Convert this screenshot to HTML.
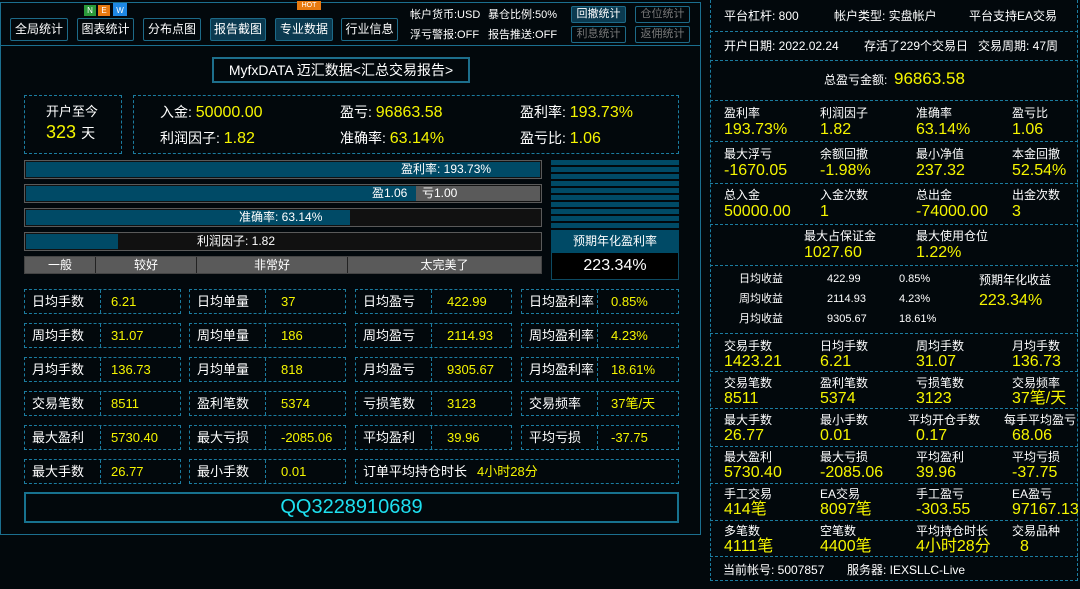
<!DOCTYPE html>
<html><head><meta charset="utf-8"><style>
*{margin:0;padding:0;box-sizing:border-box}
body{width:1080px;height:589px;background:#02080c;color:#fff;font-family:"Liberation Sans","Noto Sans CJK SC",sans-serif;font-size:12px;position:relative;overflow:hidden}
.a{position:absolute;white-space:nowrap}
.y{color:#f5f500}
.btn{position:absolute;top:18px;height:23px;border:1px solid #1d6a88;border-radius:2px;font-size:12px;line-height:21px;text-align:center;color:#fff}
.sb{position:absolute;height:17px;width:55px;border:1px solid #1d6a88;border-radius:2px;font-size:11px;line-height:15px;text-align:center;color:#777}
.d{position:absolute;border:1px dashed #1b7ca0}
.bar{position:absolute;left:24px;width:518px;border:1px solid #5a5a5a;background:#111}
.fill{position:absolute;left:1px;top:1px;bottom:1px;background:#004a66}
.bt{position:absolute;top:0;line-height:17px;font-size:12px}
.cell{position:absolute;height:25px;border:1px dashed #1b7ca0;font-size:13px;line-height:23px}
.cell .l{position:absolute;left:7px}
.cell .v{position:absolute;color:#f5f500;font-size:13px}
.cell .sp{position:absolute;left:75px;top:0;bottom:0;border-left:1px dashed #1b7ca0}
.rl{position:absolute;font-size:12px;line-height:14px;white-space:nowrap}
.rv{position:absolute;font-size:16px;line-height:18px;color:#f5f500;white-space:nowrap}
.tx{position:absolute;font-size:11px;line-height:14px;white-space:nowrap}
</style></head><body>
<div class="a" style="left:0;top:2px;width:701px;height:533px;border:1px solid #1b6f8f"></div>
<div class="a" style="left:0;top:45px;width:701px;border-top:1px solid #1b6f8f"></div>

<div class="btn" style="left:10px;width:58px">全局统计</div>
<div class="btn" style="left:77px;width:57px">图表统计</div>
<div class="btn" style="left:143px;width:58px">分布点图</div>
<div class="btn" style="left:210px;width:56px;background:#0b3a50">报告截图</div>
<div class="btn" style="left:275px;width:58px;background:#0b3a50">专业数据</div>
<div class="btn" style="left:341px;width:57px">行业信息</div>
<div class="a" style="left:84px;top:5px;width:12px;height:11px;background:#2a9a3a;font-size:8px;line-height:11px;text-align:center">N</div>
<div class="a" style="left:98px;top:5px;width:12px;height:11px;background:#e87a10;font-size:8px;line-height:11px;text-align:center">E</div>
<div class="a" style="left:113px;top:3px;width:14px;height:13px;background:#1e88e5;font-size:8px;line-height:15px;text-align:center">W</div>
<div class="a" style="left:297px;top:1px;width:24px;height:9px;background:#e87a10;font-size:7px;line-height:9px;text-align:center">HOT</div>
<div class="tx" style="left:410px;top:8px">帐户货币:USD</div>
<div class="tx" style="left:488px;top:8px">暴仓比例:50%</div>
<div class="tx" style="left:410px;top:28px">浮亏警报:OFF</div>
<div class="tx" style="left:488px;top:28px">报告推送:OFF</div>
<div class="sb" style="left:571px;top:6px;color:#fff;background:#0b3a50">回撤统计</div>
<div class="sb" style="left:635px;top:6px">仓位统计</div>
<div class="sb" style="left:571px;top:26px">利息统计</div>
<div class="sb" style="left:635px;top:26px">返佣统计</div>

<div class="a" style="left:212px;top:57px;width:258px;height:26px;border:2px solid #1d6f8c;font-size:14px;line-height:22px;text-align:center">MyfxDATA 迈汇数据&lt;汇总交易报告&gt;</div>

<div class="d" style="left:24px;top:95px;width:98px;height:59px"></div>
<div class="a" style="left:46px;top:101px;font-size:13px">开户至今</div>
<div class="a" style="left:46px;top:122px;font-size:18px"><span class="y">323</span> <span style="font-size:14px">天</span></div>
<div class="d" style="left:133px;top:95px;width:546px;height:59px"></div>
<div class="a" style="left:160px;top:102px;font-size:14px">入金: <span class="y" style="font-size:16px">50000.00</span></div>
<div class="a" style="left:340px;top:102px;font-size:14px">盈亏: <span class="y" style="font-size:16px">96863.58</span></div>
<div class="a" style="left:520px;top:102px;font-size:14px">盈利率: <span class="y" style="font-size:16px">193.73%</span></div>
<div class="a" style="left:160px;top:128px;font-size:14px">利润因子: <span class="y" style="font-size:16px">1.82</span></div>
<div class="a" style="left:340px;top:128px;font-size:14px">准确率: <span class="y" style="font-size:16px">63.14%</span></div>
<div class="a" style="left:520px;top:128px;font-size:14px">盈亏比: <span class="y" style="font-size:16px">1.06</span></div>

<div class="bar" style="top:160px;height:19px"><div class="fill" style="right:1px"></div><div class="bt" style="left:376px">盈利率: 193.73%</div></div>
<div class="bar" style="top:184px;height:19px"><div class="fill" style="width:390px"></div><div class="fill" style="left:391px;right:1px;background:#5a5a5a"></div><div class="bt" style="left:347px">盈1.06</div><div class="bt" style="left:397px">亏1.00</div></div>
<div class="bar" style="top:208px;height:19px"><div class="fill" style="width:324px"></div><div class="bt" style="left:214px">准确率: 63.14%</div></div>
<div class="bar" style="top:232px;height:19px"><div class="fill" style="width:92px"></div><div class="bt" style="left:172px">利润因子: 1.82</div></div>
<div class="bar" style="top:256px;height:18px;background:#5a5a5a;border-color:#444">
<div class="bt" style="left:0;width:71px;text-align:center;line-height:16px;border-right:1px solid #222">一般</div>
<div class="bt" style="left:71px;width:101px;text-align:center;line-height:16px;border-right:1px solid #222">较好</div>
<div class="bt" style="left:172px;width:151px;text-align:center;line-height:16px;border-right:1px solid #222">非常好</div>
<div class="bt" style="left:323px;width:193px;text-align:center;line-height:16px">太完美了</div></div>

<div class="a" style="left:551px;top:160px;width:128px;height:70px;background:repeating-linear-gradient(#004a66 0 5px,#02080c 5px 7px)"></div>
<div class="a" style="left:551px;top:230px;width:128px;height:50px;border:1px solid #0d4a62;background:#000"></div>
<div class="a" style="left:551px;top:230px;width:128px;height:23px;background:#004a66;text-align:center;line-height:23px;font-size:12px">预期年化盈利率</div>
<div class="a" style="left:551px;top:254px;width:128px;text-align:center;font-size:16px;line-height:24px">223.34%</div>

<div class="cell" style="left:24px;top:289px;width:157px"><span class="l">日均手数</span><span class="sp"></span><span class="v" style="left:86px">6.21</span></div>
<div class="cell" style="left:189px;top:289px;width:157px"><span class="l">日均单量</span><span class="sp"></span><span class="v" style="left:91px">37</span></div>
<div class="cell" style="left:355px;top:289px;width:157px"><span class="l">日均盈亏</span><span class="sp"></span><span class="v" style="left:91px">422.99</span></div>
<div class="cell" style="left:521px;top:289px;width:158px"><span class="l">日均盈利率</span><span class="sp"></span><span class="v" style="left:89px">0.85%</span></div>
<div class="cell" style="left:24px;top:323px;width:157px"><span class="l">周均手数</span><span class="sp"></span><span class="v" style="left:86px">31.07</span></div>
<div class="cell" style="left:189px;top:323px;width:157px"><span class="l">周均单量</span><span class="sp"></span><span class="v" style="left:91px">186</span></div>
<div class="cell" style="left:355px;top:323px;width:157px"><span class="l">周均盈亏</span><span class="sp"></span><span class="v" style="left:91px">2114.93</span></div>
<div class="cell" style="left:521px;top:323px;width:158px"><span class="l">周均盈利率</span><span class="sp"></span><span class="v" style="left:89px">4.23%</span></div>
<div class="cell" style="left:24px;top:357px;width:157px"><span class="l">月均手数</span><span class="sp"></span><span class="v" style="left:86px">136.73</span></div>
<div class="cell" style="left:189px;top:357px;width:157px"><span class="l">月均单量</span><span class="sp"></span><span class="v" style="left:91px">818</span></div>
<div class="cell" style="left:355px;top:357px;width:157px"><span class="l">月均盈亏</span><span class="sp"></span><span class="v" style="left:91px">9305.67</span></div>
<div class="cell" style="left:521px;top:357px;width:158px"><span class="l">月均盈利率</span><span class="sp"></span><span class="v" style="left:89px">18.61%</span></div>
<div class="cell" style="left:24px;top:391px;width:157px"><span class="l">交易笔数</span><span class="sp"></span><span class="v" style="left:86px">8511</span></div>
<div class="cell" style="left:189px;top:391px;width:157px"><span class="l">盈利笔数</span><span class="sp"></span><span class="v" style="left:91px">5374</span></div>
<div class="cell" style="left:355px;top:391px;width:157px"><span class="l">亏损笔数</span><span class="sp"></span><span class="v" style="left:91px">3123</span></div>
<div class="cell" style="left:521px;top:391px;width:158px"><span class="l">交易频率</span><span class="sp"></span><span class="v" style="left:89px">37笔/天</span></div>
<div class="cell" style="left:24px;top:425px;width:157px"><span class="l">最大盈利</span><span class="sp"></span><span class="v" style="left:86px">5730.40</span></div>
<div class="cell" style="left:189px;top:425px;width:157px"><span class="l">最大亏损</span><span class="sp"></span><span class="v" style="left:91px">-2085.06</span></div>
<div class="cell" style="left:355px;top:425px;width:157px"><span class="l">平均盈利</span><span class="sp"></span><span class="v" style="left:91px">39.96</span></div>
<div class="cell" style="left:521px;top:425px;width:158px"><span class="l">平均亏损</span><span class="sp"></span><span class="v" style="left:89px">-37.75</span></div>
<div class="cell" style="left:24px;top:459px;width:157px"><span class="l">最大手数</span><span class="sp"></span><span class="v" style="left:86px">26.77</span></div>
<div class="cell" style="left:189px;top:459px;width:157px"><span class="l">最小手数</span><span class="sp"></span><span class="v" style="left:91px">0.01</span></div>
<div class="cell" style="left:355px;top:459px;width:324px"><span class="l">订单平均持仓时长</span><span class="v" style="left:121px">4小时28分</span></div>

<div class="a" style="left:24px;top:492px;width:655px;height:31px;border:2px solid #17728f;text-align:center;font-size:20px;line-height:27px;color:#1ee0f0">QQ3228910689</div>

<div class="d" style="left:710px;top:0;width:368px;height:581px;border-top:none"></div>
<div class="a" style="left:710px;top:31px;width:368px;border-top:1px dashed #1b7ca0"></div>
<div class="a" style="left:710px;top:60px;width:368px;border-top:1px dashed #1b7ca0"></div>
<div class="a" style="left:710px;top:100px;width:368px;border-top:1px dashed #1b7ca0"></div>
<div class="a" style="left:710px;top:141px;width:368px;border-top:1px dashed #1b7ca0"></div>
<div class="a" style="left:710px;top:183px;width:368px;border-top:1px dashed #1b7ca0"></div>
<div class="a" style="left:710px;top:224px;width:368px;border-top:1px dashed #1b7ca0"></div>
<div class="a" style="left:710px;top:265px;width:368px;border-top:1px dashed #1b7ca0"></div>
<div class="a" style="left:710px;top:333px;width:368px;border-top:1px dashed #1b7ca0"></div>
<div class="a" style="left:710px;top:371px;width:368px;border-top:1px dashed #1b7ca0"></div>
<div class="a" style="left:710px;top:408px;width:368px;border-top:1px dashed #1b7ca0"></div>
<div class="a" style="left:710px;top:446px;width:368px;border-top:1px dashed #1b7ca0"></div>
<div class="a" style="left:710px;top:483px;width:368px;border-top:1px dashed #1b7ca0"></div>
<div class="a" style="left:710px;top:520px;width:368px;border-top:1px dashed #1b7ca0"></div>
<div class="a" style="left:710px;top:556px;width:368px;border-top:1px dashed #1b7ca0"></div>

<div class="rl" style="left:724px;top:9px">平台杠杆: 800</div>
<div class="rl" style="left:834px;top:9px">帐户类型: 实盘帐户</div>
<div class="rl" style="left:969px;top:9px">平台支持EA交易</div>
<div class="rl" style="left:724px;top:39px">开户日期: 2022.02.24</div>
<div class="rl" style="left:864px;top:39px">存活了229个交易日</div>
<div class="rl" style="left:978px;top:39px">交易周期: 47周</div>
<div class="rl" style="left:824px;top:73px">总盈亏金额:</div>
<div class="rv" style="left:894px;top:70px;font-size:17px">96863.58</div>

<div class="rl" style="left:724px;top:106px">盈利率</div><div class="rv" style="left:724px;top:121px">193.73%</div>
<div class="rl" style="left:820px;top:106px">利润因子</div><div class="rv" style="left:820px;top:121px">1.82</div>
<div class="rl" style="left:916px;top:106px">准确率</div><div class="rv" style="left:916px;top:121px">63.14%</div>
<div class="rl" style="left:1012px;top:106px">盈亏比</div><div class="rv" style="left:1012px;top:121px">1.06</div>

<div class="rl" style="left:724px;top:147px">最大浮亏</div><div class="rv" style="left:724px;top:162px">-1670.05</div>
<div class="rl" style="left:820px;top:147px">余额回撤</div><div class="rv" style="left:820px;top:162px">-1.98%</div>
<div class="rl" style="left:916px;top:147px">最小净值</div><div class="rv" style="left:916px;top:162px">237.32</div>
<div class="rl" style="left:1012px;top:147px">本金回撤</div><div class="rv" style="left:1012px;top:162px">52.54%</div>

<div class="rl" style="left:724px;top:188px">总入金</div><div class="rv" style="left:724px;top:203px">50000.00</div>
<div class="rl" style="left:820px;top:188px">入金次数</div><div class="rv" style="left:820px;top:203px">1</div>
<div class="rl" style="left:916px;top:188px">总出金</div><div class="rv" style="left:916px;top:203px">-74000.00</div>
<div class="rl" style="left:1012px;top:188px">出金次数</div><div class="rv" style="left:1012px;top:203px">3</div>

<div class="rl" style="left:804px;top:229px">最大占保证金</div><div class="rv" style="left:804px;top:244px">1027.60</div>
<div class="rl" style="left:916px;top:229px">最大使用仓位</div><div class="rv" style="left:916px;top:244px">1.22%</div>

<div class="tx" style="left:739px;top:272px">日均收益</div><div class="tx" style="left:827px;top:272px">422.99</div><div class="tx" style="left:899px;top:272px">0.85%</div>
<div class="tx" style="left:739px;top:292px">周均收益</div><div class="tx" style="left:827px;top:292px">2114.93</div><div class="tx" style="left:899px;top:292px">4.23%</div>
<div class="tx" style="left:739px;top:312px">月均收益</div><div class="tx" style="left:827px;top:312px">9305.67</div><div class="tx" style="left:899px;top:312px">18.61%</div>
<div class="rl" style="left:979px;top:273px">预期年化收益</div><div class="rv" style="left:979px;top:292px">223.34%</div>

<div class="rl" style="left:724px;top:339px">交易手数</div><div class="rv" style="left:724px;top:353px">1423.21</div>
<div class="rl" style="left:820px;top:339px">日均手数</div><div class="rv" style="left:820px;top:353px">6.21</div>
<div class="rl" style="left:916px;top:339px">周均手数</div><div class="rv" style="left:916px;top:353px">31.07</div>
<div class="rl" style="left:1012px;top:339px">月均手数</div><div class="rv" style="left:1012px;top:353px">136.73</div>

<div class="rl" style="left:724px;top:376px">交易笔数</div><div class="rv" style="left:724px;top:390px">8511</div>
<div class="rl" style="left:820px;top:376px">盈利笔数</div><div class="rv" style="left:820px;top:390px">5374</div>
<div class="rl" style="left:916px;top:376px">亏损笔数</div><div class="rv" style="left:916px;top:390px">3123</div>
<div class="rl" style="left:1012px;top:376px">交易频率</div><div class="rv" style="left:1012px;top:390px">37笔/天</div>

<div class="rl" style="left:724px;top:413px">最大手数</div><div class="rv" style="left:724px;top:427px">26.77</div>
<div class="rl" style="left:820px;top:413px">最小手数</div><div class="rv" style="left:820px;top:427px">0.01</div>
<div class="rl" style="left:908px;top:413px">平均开仓手数</div><div class="rv" style="left:916px;top:427px">0.17</div>
<div class="rl" style="left:1004px;top:413px">每手平均盈亏</div><div class="rv" style="left:1012px;top:427px">68.06</div>

<div class="rl" style="left:724px;top:450px">最大盈利</div><div class="rv" style="left:724px;top:464px">5730.40</div>
<div class="rl" style="left:820px;top:450px">最大亏损</div><div class="rv" style="left:820px;top:464px">-2085.06</div>
<div class="rl" style="left:916px;top:450px">平均盈利</div><div class="rv" style="left:916px;top:464px">39.96</div>
<div class="rl" style="left:1012px;top:450px">平均亏损</div><div class="rv" style="left:1012px;top:464px">-37.75</div>

<div class="rl" style="left:724px;top:487px">手工交易</div><div class="rv" style="left:724px;top:501px">414笔</div>
<div class="rl" style="left:820px;top:487px">EA交易</div><div class="rv" style="left:820px;top:501px">8097笔</div>
<div class="rl" style="left:916px;top:487px">手工盈亏</div><div class="rv" style="left:916px;top:501px">-303.55</div>
<div class="rl" style="left:1012px;top:487px">EA盈亏</div><div class="rv" style="left:1012px;top:501px">97167.13</div>

<div class="rl" style="left:724px;top:524px">多笔数</div><div class="rv" style="left:724px;top:538px">4111笔</div>
<div class="rl" style="left:820px;top:524px">空笔数</div><div class="rv" style="left:820px;top:538px">4400笔</div>
<div class="rl" style="left:916px;top:524px">平均持仓时长</div><div class="rv" style="left:916px;top:538px">4小时28分</div>
<div class="rl" style="left:1012px;top:524px">交易品种</div><div class="rv" style="left:1020px;top:538px">8</div>

<div class="rl" style="left:723px;top:563px">当前帐号: 5007857</div>
<div class="rl" style="left:847px;top:563px">服务器: IEXSLLC-Live</div>
</body></html>
